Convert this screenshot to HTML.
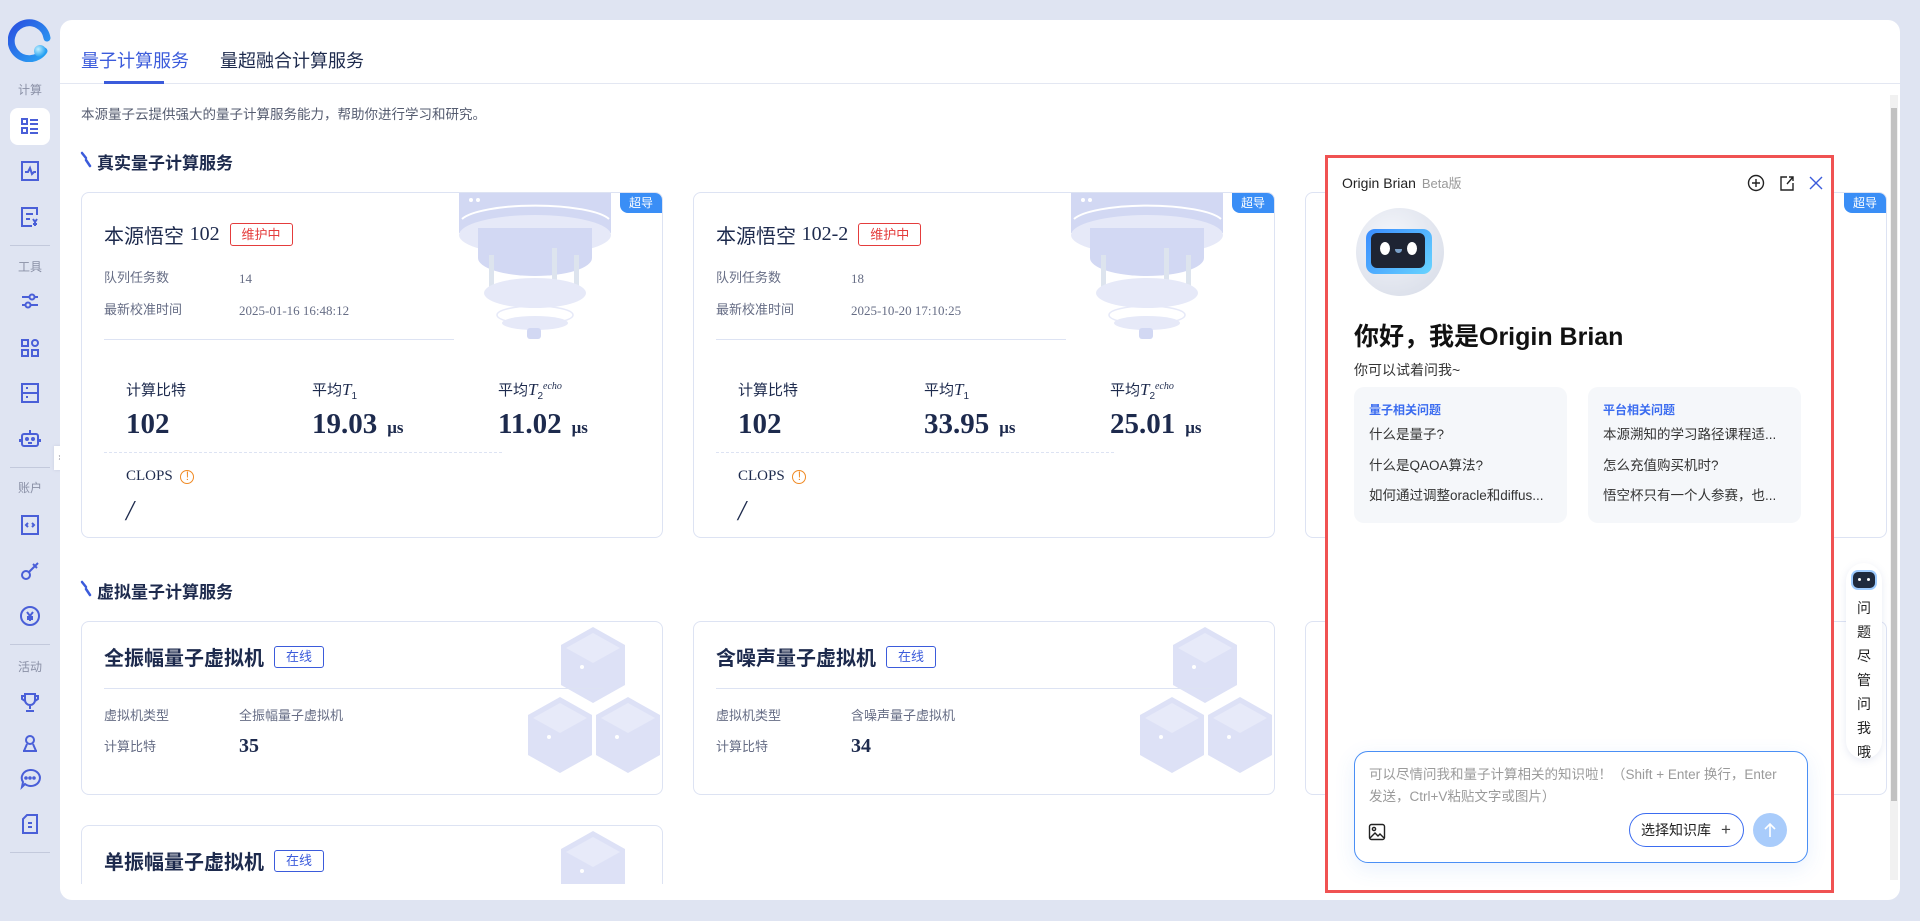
<!DOCTYPE html>
<html><head><meta charset="utf-8"><style>
*{margin:0;padding:0;box-sizing:border-box}
html,body{overflow:hidden}
body{width:1920px;height:921px;background:#dfe4f2;font-family:"Liberation Sans","Noto Sans CJK SC",sans-serif;position:relative;color:#1d2a4d}
.a{position:absolute}
.side-lbl{position:absolute;left:0;width:60px;text-align:center;font-size:12px;color:#8a90a6}
.sic{position:absolute;left:18px;width:24px;height:24px}
.sdiv{position:absolute;left:10px;width:40px;height:1px;background:#c3c9dc}
.panel{position:absolute;left:60px;top:20px;width:1840px;height:880px;background:#fff;border-radius:12px;overflow:hidden}
.card{position:absolute;background:#fff;border:1px solid #dde3f3;border-radius:8px;overflow:hidden}
.badge{position:absolute;right:0;top:0;width:42px;height:20px;background:#3a8ef6;color:#fff;font-size:12px;text-align:center;line-height:20px;border-bottom-left-radius:8px}
.ttl{position:absolute;font-size:20px;color:#1d2a4d;white-space:nowrap;display:flex;align-items:center}
.tag{display:inline-block;font-size:13px;border:1px solid;border-radius:3px;text-align:center;margin-left:10px;font-weight:normal}
.lbl{position:absolute;font-size:13px;color:#666d85;line-height:18px}
.val{position:absolute;font-size:13px;color:#666d85;font-family:"Liberation Serif",serif;line-height:18px}
.mh{position:absolute;font-size:15px;color:#1d2a4d}
.mv{position:absolute;font-size:29px;font-weight:bold;font-family:"Liberation Serif",serif;color:#1d2a4d}
.mv small{font-size:17px;margin-left:10px}
.sec{position:absolute;font-size:17px;font-weight:bold;color:#1d2a4d}
.q{position:absolute;font-size:13.5px;color:#333}
</style></head><body>
<svg class="a" style="left:8px;top:18px" width="44" height="44" viewBox="0 0 44 44">
<defs><linearGradient id="lg" x1="0" y1="0" x2="1" y2="1"><stop offset="0" stop-color="#2a4fe0"/><stop offset="1" stop-color="#2aa6f5"/></linearGradient>
<radialGradient id="bl" cx="0.35" cy="0.35" r="0.7"><stop offset="0" stop-color="#bfefff"/><stop offset="1" stop-color="#1a9bf0"/></radialGradient></defs>
<path d="M36 33 A18 18 0 1 1 39 20" fill="none" stroke="url(#lg)" stroke-width="7" stroke-linecap="round"/>
<circle cx="32" cy="33" r="6" fill="url(#bl)"/></svg>
<div class="side-lbl" style="top:81px">计算</div>
<div class="a" style="left:10px;top:108px;width:40px;height:37px;background:#fff;border-radius:8px"></div>
<svg class="sic" style="top:114px" viewBox="0 0 24 24" fill="none" stroke="#4a5fd8" stroke-width="2"><rect x="4" y="5" width="5" height="5"/><rect x="4" y="14" width="5" height="5"/><path d="M12 6h8M12 10h8M12 15h8M12 19h8"/></svg>
<svg class="sic" style="top:159px" viewBox="0 0 24 24" fill="none" stroke="#4a5fd8" stroke-width="2"><rect x="4" y="3" width="16" height="18"/><path d="M7 13h3l2-4 2 6 2-2h2"/></svg>
<svg class="sic" style="top:205px" viewBox="0 0 24 24" fill="none" stroke="#4a5fd8" stroke-width="2"><path d="M19 10V3H4v18h10"/><path d="M8 9h7M8 14h4M15 14l2 3 2-3M17 17v4M15 19h4"/></svg>
<div class="sdiv" style="top:245px"></div>
<div class="side-lbl" style="top:258px">工具</div>
<svg class="sic" style="top:289px" viewBox="0 0 24 24" fill="none" stroke="#4a5fd8" stroke-width="2"><circle cx="14" cy="8" r="2.5"/><circle cx="10" cy="16" r="2.5"/><path d="M4 8h7M17 8h3M4 16h3M13 16h7"/></svg>
<svg class="sic" style="top:336px" viewBox="0 0 24 24" fill="none" stroke="#4a5fd8" stroke-width="2"><rect x="4" y="4" width="6" height="6"/><circle cx="17" cy="7" r="3"/><rect x="4" y="14" width="6" height="6"/><rect x="14" y="14" width="6" height="6"/></svg>
<svg class="sic" style="top:381px" viewBox="0 0 24 24" fill="none" stroke="#4a5fd8" stroke-width="2"><rect x="4" y="3" width="16" height="18"/><path d="M4 12h16M8 7h2M8 16h2"/></svg>
<svg class="sic" style="top:426px" viewBox="0 0 24 24" fill="none" stroke="#4a5fd8" stroke-width="2"><rect x="4" y="8" width="16" height="12" rx="2"/><path d="M12 8V4M2 13v3M22 13v3"/><circle cx="9" cy="13" r="1" fill="#4a5fd8"/><circle cx="15" cy="13" r="1" fill="#4a5fd8"/><path d="M10 17h4"/></svg>
<div class="sdiv" style="top:467px"></div>
<div class="side-lbl" style="top:479px">账户</div>
<svg class="sic" style="top:513px" viewBox="0 0 24 24" fill="none" stroke="#4a5fd8" stroke-width="2"><rect x="4" y="3" width="16" height="18"/><path d="M10 10l-2 2 2 2M14 10l2 2-2 2"/></svg>
<svg class="sic" style="top:559px" viewBox="0 0 24 24" fill="none" stroke="#4a5fd8" stroke-width="2"><circle cx="8" cy="16" r="4"/><path d="M11 13l9-9M17 7l2 2M15 5l2 2"/></svg>
<svg class="sic" style="top:604px" viewBox="0 0 24 24" fill="none" stroke="#4a5fd8" stroke-width="2"><circle cx="12" cy="12" r="9"/><path d="M9 8l3 4 3-4M12 12v5M9 13h6M9 15h6"/></svg>
<div class="sdiv" style="top:644px"></div>
<div class="side-lbl" style="top:658px">活动</div>
<svg class="sic" style="top:690px" viewBox="0 0 24 24" fill="none" stroke="#4a5fd8" stroke-width="2"><path d="M7 4h10v6a5 5 0 0 1-10 0zM7 6H4v3l3 2M17 6h3v3l-3 2M12 15v4M8 21h8"/></svg>
<svg class="sic" style="top:731px" viewBox="0 0 24 24" fill="none" stroke="#4a5fd8" stroke-width="2"><circle cx="12" cy="9" r="4"/><path d="M6 20l3-7M18 20l-3-7M5 20h14"/></svg>
<svg class="sic" style="top:767px" viewBox="0 0 24 24" fill="none" stroke="#4a5fd8" stroke-width="2"><path d="M12 3a9 8 0 1 1-5 14l-3 3 1-5A9 8 0 0 1 12 3z"/><circle cx="8" cy="11" r=".8" fill="#4a5fd8"/><circle cx="12" cy="11" r=".8" fill="#4a5fd8"/><circle cx="16" cy="11" r=".8" fill="#4a5fd8"/></svg>
<svg class="sic" style="top:812px" viewBox="0 0 24 24" fill="none" stroke="#4a5fd8" stroke-width="2"><path d="M9 3h10v18H5V7z"/><path d="M10 11h4M10 15h4"/></svg>
<div class="sdiv" style="top:852px"></div>
<div class="a" style="left:54px;top:446px;width:12px;height:24px;background:#fff;border-radius:0 6px 6px 0;box-shadow:0 0 3px #c8cde0;font-size:10px;color:#667;text-align:center;line-height:24px">›</div>

<div class="panel">
 <div class="a" style="left:21px;top:27px;font-size:18px;color:#3b5bdb">量子计算服务</div>
 <div class="a" style="left:160px;top:27px;font-size:18px;color:#1d2a4d">量超融合计算服务</div>
 <div class="a" style="left:0;top:63px;width:1840px;height:1px;background:#e3e7f2"></div>
 <div class="a" style="left:44px;top:61px;width:60px;height:3px;background:#3b5bdb"></div>
 <div class="a" style="left:21px;top:83px;font-size:13.5px;color:#555c70">本源量子云提供强大的量子计算服务能力，帮助你进行学习和研究。</div>
 <div class="a" style="left:0;top:0;width:1840px;height:864px;overflow:hidden">
 <svg class="a" style="left:20px;top:131px" width="12" height="18"><path d="M2 2l4 5M6 9l4 6" stroke="#3b5bdb" stroke-width="2.5" fill="none" stroke-linecap="round"/></svg>
 <div class="sec" style="left:37px;top:129px">真实量子计算服务</div>

 <div class="card" style="left:21px;top:172px;width:582px;height:346px">
  <svg class="a" style="left:377px;top:0" width="155" height="146" viewBox="0 0 155 146"><g fill="#d2d8f3"><rect x="0" y="0" width="152" height="20"/><ellipse cx="76" cy="22" rx="76" ry="20"/><rect x="0" y="20" width="152" height="20"/><ellipse cx="76" cy="42" rx="76" ry="20" fill="#e6e9f8"/><rect x="19" y="35" width="114" height="30"/><ellipse cx="76" cy="65" rx="57" ry="18"/><rect x="30" y="62" width="5" height="35" fill="#dde4ee"/><rect x="115" y="62" width="5" height="35" fill="#dde4ee"/><rect x="93" y="55" width="5" height="40" fill="#dde4ee"/><ellipse cx="76" cy="100" rx="51" ry="15" fill="#e6e9f8"/><ellipse cx="76" cy="122" rx="38" ry="9" fill="none" stroke="#e6e9f8" stroke-width="1.5"/><ellipse cx="76" cy="130" rx="33" ry="7" fill="#e6e9f8"/><rect x="68" y="135" width="14" height="11" rx="3"/></g><circle cx="12" cy="7" r="2" fill="#fff"/><circle cx="19" cy="7" r="2" fill="#fff"/><path d="M3 26 A76 18 0 0 1 150 26" stroke="#fff" stroke-width="2" fill="none"/></svg>
  <div class="badge">超导</div>
  <div class="ttl" style="left:22px;top:27px">本源悟空&nbsp;<span style="font-family:'Liberation Serif',serif">102</span><span class="tag" style="width:63px;height:23px;line-height:21px;color:#e43c3c;border-color:#e43c3c">维护中</span></div>
  <div class="lbl" style="left:22px;top:76px">队列任务数</div><div class="val" style="left:157px;top:77px">14</div>
  <div class="lbl" style="left:22px;top:108px">最新校准时间</div><div class="val" style="left:157px;top:109px">2025-01-16 16:48:12</div>
  <div class="a" style="left:22px;top:146px;width:350px;height:1px;background:#dde3f3"></div>
  <div class="mh" style="left:44px;top:186px">计算比特</div>
  <div class="mh" style="left:230px;top:186px">平均<i style="font-family:'Liberation Serif',serif;font-size:17px">T</i><sub style="font-size:10px">1</sub></div>
  <div class="mh" style="left:416px;top:186px">平均<i style="font-family:'Liberation Serif',serif;font-size:17px">T</i><sub style="font-size:10px">2</sub><sup style="font-size:10px;font-style:italic;font-family:'Liberation Serif',serif">echo</sup></div>
  <div class="mv" style="left:44px;top:215px">102</div>
  <div class="mv" style="left:230px;top:215px">19.03<small>μs</small></div>
  <div class="mv" style="left:416px;top:215px">11.02<small>μs</small></div>
  <div class="a" style="left:22px;top:259px;width:398px;border-top:1px dashed #dde3f3"></div>
  <div class="mh" style="left:44px;top:275px;font-family:'Liberation Serif',serif">CLOPS <span style="color:#f08a24;font-size:12px;border:1.5px solid #f08a24;border-radius:50%;display:inline-block;width:14px;height:14px;line-height:11px;text-align:center;font-family:'Liberation Sans';margin-left:4px">!</span></div>
  <div class="a" style="left:44px;top:303px;font-size:28px;font-family:'Liberation Serif',serif;font-style:italic">/</div>
 </div>
 <div class="card" style="left:633px;top:172px;width:582px;height:346px">
  <svg class="a" style="left:377px;top:0" width="155" height="146" viewBox="0 0 155 146"><g fill="#d2d8f3"><rect x="0" y="0" width="152" height="20"/><ellipse cx="76" cy="22" rx="76" ry="20"/><rect x="0" y="20" width="152" height="20"/><ellipse cx="76" cy="42" rx="76" ry="20" fill="#e6e9f8"/><rect x="19" y="35" width="114" height="30"/><ellipse cx="76" cy="65" rx="57" ry="18"/><rect x="30" y="62" width="5" height="35" fill="#dde4ee"/><rect x="115" y="62" width="5" height="35" fill="#dde4ee"/><rect x="93" y="55" width="5" height="40" fill="#dde4ee"/><ellipse cx="76" cy="100" rx="51" ry="15" fill="#e6e9f8"/><ellipse cx="76" cy="122" rx="38" ry="9" fill="none" stroke="#e6e9f8" stroke-width="1.5"/><ellipse cx="76" cy="130" rx="33" ry="7" fill="#e6e9f8"/><rect x="68" y="135" width="14" height="11" rx="3"/></g><circle cx="12" cy="7" r="2" fill="#fff"/><circle cx="19" cy="7" r="2" fill="#fff"/><path d="M3 26 A76 18 0 0 1 150 26" stroke="#fff" stroke-width="2" fill="none"/></svg>
  <div class="badge">超导</div>
  <div class="ttl" style="left:22px;top:27px">本源悟空&nbsp;<span style="font-family:'Liberation Serif',serif">102-2</span><span class="tag" style="width:63px;height:23px;line-height:21px;color:#e43c3c;border-color:#e43c3c">维护中</span></div>
  <div class="lbl" style="left:22px;top:76px">队列任务数</div><div class="val" style="left:157px;top:77px">18</div>
  <div class="lbl" style="left:22px;top:108px">最新校准时间</div><div class="val" style="left:157px;top:109px">2025-10-20 17:10:25</div>
  <div class="a" style="left:22px;top:146px;width:350px;height:1px;background:#dde3f3"></div>
  <div class="mh" style="left:44px;top:186px">计算比特</div>
  <div class="mh" style="left:230px;top:186px">平均<i style="font-family:'Liberation Serif',serif;font-size:17px">T</i><sub style="font-size:10px">1</sub></div>
  <div class="mh" style="left:416px;top:186px">平均<i style="font-family:'Liberation Serif',serif;font-size:17px">T</i><sub style="font-size:10px">2</sub><sup style="font-size:10px;font-style:italic;font-family:'Liberation Serif',serif">echo</sup></div>
  <div class="mv" style="left:44px;top:215px">102</div>
  <div class="mv" style="left:230px;top:215px">33.95<small>μs</small></div>
  <div class="mv" style="left:416px;top:215px">25.01<small>μs</small></div>
  <div class="a" style="left:22px;top:259px;width:398px;border-top:1px dashed #dde3f3"></div>
  <div class="mh" style="left:44px;top:275px;font-family:'Liberation Serif',serif">CLOPS <span style="color:#f08a24;font-size:12px;border:1.5px solid #f08a24;border-radius:50%;display:inline-block;width:14px;height:14px;line-height:11px;text-align:center;font-family:'Liberation Sans';margin-left:4px">!</span></div>
  <div class="a" style="left:44px;top:303px;font-size:28px;font-family:'Liberation Serif',serif;font-style:italic">/</div>
 </div>
 <div class="card" style="left:1245px;top:172px;width:582px;height:346px"><div class="badge">超导</div></div>

 <svg class="a" style="left:20px;top:560px" width="12" height="18"><path d="M2 2l4 5M6 9l4 6" stroke="#3b5bdb" stroke-width="2.5" fill="none" stroke-linecap="round"/></svg>
 <div class="sec" style="left:37px;top:558px">虚拟量子计算服务</div>

 <div class="card" style="left:21px;top:601px;width:582px;height:174px">
  <svg class="a" style="left:445px;top:5px" width="135" height="170" viewBox="0 0 135 170"><g fill="#dde1f6"><path d="M66 0l32 18v40l-32 18-32-18V18z"/><path d="M33 70l32 18v40l-32 18L1 128V88z"/><path d="M101 70l32 18v40l-32 18-32-18V88z"/></g><g fill="#e7eaf9"><path d="M66 6l27 15-27 15-27-15z"/><path d="M33 76l27 15-27 15-27-15z"/><path d="M101 76l27 15-27 15-27-15z"/></g><g fill="#fff"><circle cx="55" cy="40" r="2"/><circle cx="22" cy="110" r="2"/><circle cx="90" cy="110" r="2"/></g></svg>
  <div class="ttl" style="left:22px;top:20px;font-weight:bold">全振幅量子虚拟机<span class="tag" style="width:50px;height:22px;line-height:20px;color:#3b5bdb;border-color:#3b5bdb">在线</span></div>
  <div class="a" style="left:22px;top:66px;width:500px;height:1px;background:#dde3f3"></div>
  <div class="lbl" style="left:22px;top:85px">虚拟机类型</div><div class="lbl" style="left:157px;top:85px">全振幅量子虚拟机</div>
  <div class="lbl" style="left:22px;top:116px">计算比特</div><div class="a" style="left:157px;top:113px;font-size:20px;font-weight:bold;font-family:'Liberation Serif',serif">35</div>
 </div>
 <div class="card" style="left:633px;top:601px;width:582px;height:174px">
  <svg class="a" style="left:445px;top:5px" width="135" height="170" viewBox="0 0 135 170"><g fill="#dde1f6"><path d="M66 0l32 18v40l-32 18-32-18V18z"/><path d="M33 70l32 18v40l-32 18L1 128V88z"/><path d="M101 70l32 18v40l-32 18-32-18V88z"/></g><g fill="#e7eaf9"><path d="M66 6l27 15-27 15-27-15z"/><path d="M33 76l27 15-27 15-27-15z"/><path d="M101 76l27 15-27 15-27-15z"/></g><g fill="#fff"><circle cx="55" cy="40" r="2"/><circle cx="22" cy="110" r="2"/><circle cx="90" cy="110" r="2"/></g></svg>
  <div class="ttl" style="left:22px;top:20px;font-weight:bold">含噪声量子虚拟机<span class="tag" style="width:50px;height:22px;line-height:20px;color:#3b5bdb;border-color:#3b5bdb">在线</span></div>
  <div class="a" style="left:22px;top:66px;width:500px;height:1px;background:#dde3f3"></div>
  <div class="lbl" style="left:22px;top:85px">虚拟机类型</div><div class="lbl" style="left:157px;top:85px">含噪声量子虚拟机</div>
  <div class="lbl" style="left:22px;top:116px">计算比特</div><div class="a" style="left:157px;top:113px;font-size:20px;font-weight:bold;font-family:'Liberation Serif',serif">34</div>
 </div>
 <div class="card" style="left:1245px;top:601px;width:582px;height:174px"></div>
 <div class="card" style="left:21px;top:805px;width:582px;height:174px">
  <svg class="a" style="left:445px;top:5px" width="135" height="170" viewBox="0 0 135 170"><path d="M66 0l32 18v40l-32 18-32-18V18z" fill="#dde1f6"/><path d="M66 6l27 15-27 15-27-15z" fill="#e7eaf9"/><circle cx="55" cy="40" r="2" fill="#fff"/></svg>
  <div class="ttl" style="left:22px;top:20px;font-weight:bold">单振幅量子虚拟机<span class="tag" style="width:50px;height:22px;line-height:20px;color:#3b5bdb;border-color:#3b5bdb">在线</span></div>
 </div>
 </div>
 <div class="a" style="left:1830px;top:75px;width:8px;height:785px;background:#f1f1f1"></div>
 <div class="a" style="left:1831px;top:88px;width:6px;height:693px;background:#c1c1c1"></div>
</div>

<div class="a" style="left:1846px;top:563px;width:36px;height:196px;background:#fff;border-radius:18px;box-shadow:0 2px 8px rgba(100,120,180,.15)"></div>
<div class="a" style="left:1853px;top:572px;width:22px;height:16px;background:#1f2a3e;border-radius:5px;box-shadow:0 0 0 2px #9ecbff"><span style="position:absolute;left:5px;top:6px;width:3px;height:3px;background:#fff;border-radius:50%"></span><span style="position:absolute;right:5px;top:6px;width:3px;height:3px;background:#fff;border-radius:50%"></span></div>
<div class="a" style="left:1846px;top:596px;width:36px;text-align:center;font-size:14px;line-height:24px;color:#222">问<br>题<br>尽<br>管<br>问<br>我<br>哦</div>

<div class="a" style="left:1325px;top:155px;width:509px;height:738px;border:3px solid #f05252;background:#fff">
 <div class="a" style="left:14px;top:15px;font-size:14px;color:#222">Origin Brian <span style="color:#999;font-size:13px;margin-left:2px">Beta版</span></div>
 <svg class="a" style="left:419px;top:16px" width="18" height="18" viewBox="0 0 18 18" fill="none" stroke="#222" stroke-width="1.4"><circle cx="9" cy="9" r="7.5"/><path d="M9 5v8M5 9h8"/></svg>
 <svg class="a" style="left:450px;top:16px" width="18" height="18" viewBox="0 0 18 18" fill="none" stroke="#222" stroke-width="1.4"><path d="M9 3H3v13h12v-7"/><path d="M9 10l6-7M11 3h4v4"/></svg>
 <svg class="a" style="left:480px;top:17px" width="16" height="16" viewBox="0 0 16 16" stroke="#3b5bdb" stroke-width="1.4"><path d="M2 2l12 12M14 2L2 14"/></svg>
 <div class="a" style="left:28px;top:50px;width:88px;height:88px;border-radius:50%;background:radial-gradient(circle at 40% 35%,#f4f6fb,#d5dae6)"></div>
 <div class="a" style="left:38px;top:71px;width:66px;height:45px;border-radius:9px;background:linear-gradient(135deg,#3a8cff,#67d4ff)"></div>
 <div class="a" style="left:43px;top:75px;width:54px;height:35px;border-radius:6px;background:#1e2433"></div>
 <div class="a" style="left:52px;top:84px;width:10px;height:13px;border-radius:50%;background:#fff"></div>
 <div class="a" style="left:79px;top:84px;width:10px;height:13px;border-radius:50%;background:#fff"></div>
 <div class="a" style="left:67px;top:91px;width:7px;height:4px;background:#7aa0c8;border-radius:0 0 4px 4px"></div>
 <div class="a" style="left:26px;top:159px;font-size:25px;font-weight:bold;color:#111">你好，我是Origin Brian</div>
 <div class="a" style="left:26px;top:202px;font-size:14px;color:#333">你可以试着问我~</div>
 <div class="a" style="left:26px;top:229px;width:213px;height:136px;background:#f5f7fa;border-radius:10px">
  <div class="a" style="left:15px;top:14px;font-size:12px;font-weight:bold;color:#3b6cf0">量子相关问题</div>
  <div class="q" style="left:15px;top:36px">什么是量子?</div>
  <div class="q" style="left:15px;top:67px">什么是QAOA算法?</div>
  <div class="q" style="left:15px;top:97px">如何通过调整oracle和diffus...</div>
 </div>
 <div class="a" style="left:260px;top:229px;width:213px;height:136px;background:#f5f7fa;border-radius:10px">
  <div class="a" style="left:15px;top:14px;font-size:12px;font-weight:bold;color:#3b6cf0">平台相关问题</div>
  <div class="q" style="left:15px;top:36px">本源溯知的学习路径课程适...</div>
  <div class="q" style="left:15px;top:67px">怎么充值购买机时?</div>
  <div class="q" style="left:15px;top:97px">悟空杯只有一个人参赛，也...</div>
 </div>
 <div class="a" style="left:26px;top:593px;width:454px;height:112px;border:1.5px solid #4a8ff5;border-radius:14px;box-shadow:0 6px 20px rgba(70,140,240,.12);background:#fff">
  <div class="a" style="left:14px;top:12px;width:420px;font-size:13.5px;line-height:22px;color:#9a9a9a">可以尽情问我和量子计算相关的知识啦！（Shift + Enter 换行，Enter 发送，Ctrl+V粘贴文字或图片）</div>
  <svg class="a" style="left:13px;top:71px" width="18" height="18" viewBox="0 0 18 18" fill="none" stroke="#222" stroke-width="1.4"><rect x="1.5" y="1.5" width="15" height="15" rx="2"/><circle cx="6" cy="6" r="1.6"/><path d="M2 15l5-5 3 3 2-2 4 4"/></svg>
  <div class="a" style="left:274px;top:61px;width:115px;height:34px;border:1.3px solid #3b6cf0;border-radius:17px;font-size:14px;color:#222;line-height:31px;padding-left:11px">选择知识库<span style="margin-left:10px;font-size:17px;color:#444">+</span></div>
  <div class="a" style="left:398px;top:61px;width:34px;height:34px;border-radius:50%;background:#a9ccfb"></div>
  <svg class="a" style="left:406px;top:69px" width="18" height="18" viewBox="0 0 18 18" stroke="#fff" stroke-width="1.6" fill="none"><path d="M9 16V3M4 8l5-5 5 5"/></svg>
 </div>
</div>
</body></html>
